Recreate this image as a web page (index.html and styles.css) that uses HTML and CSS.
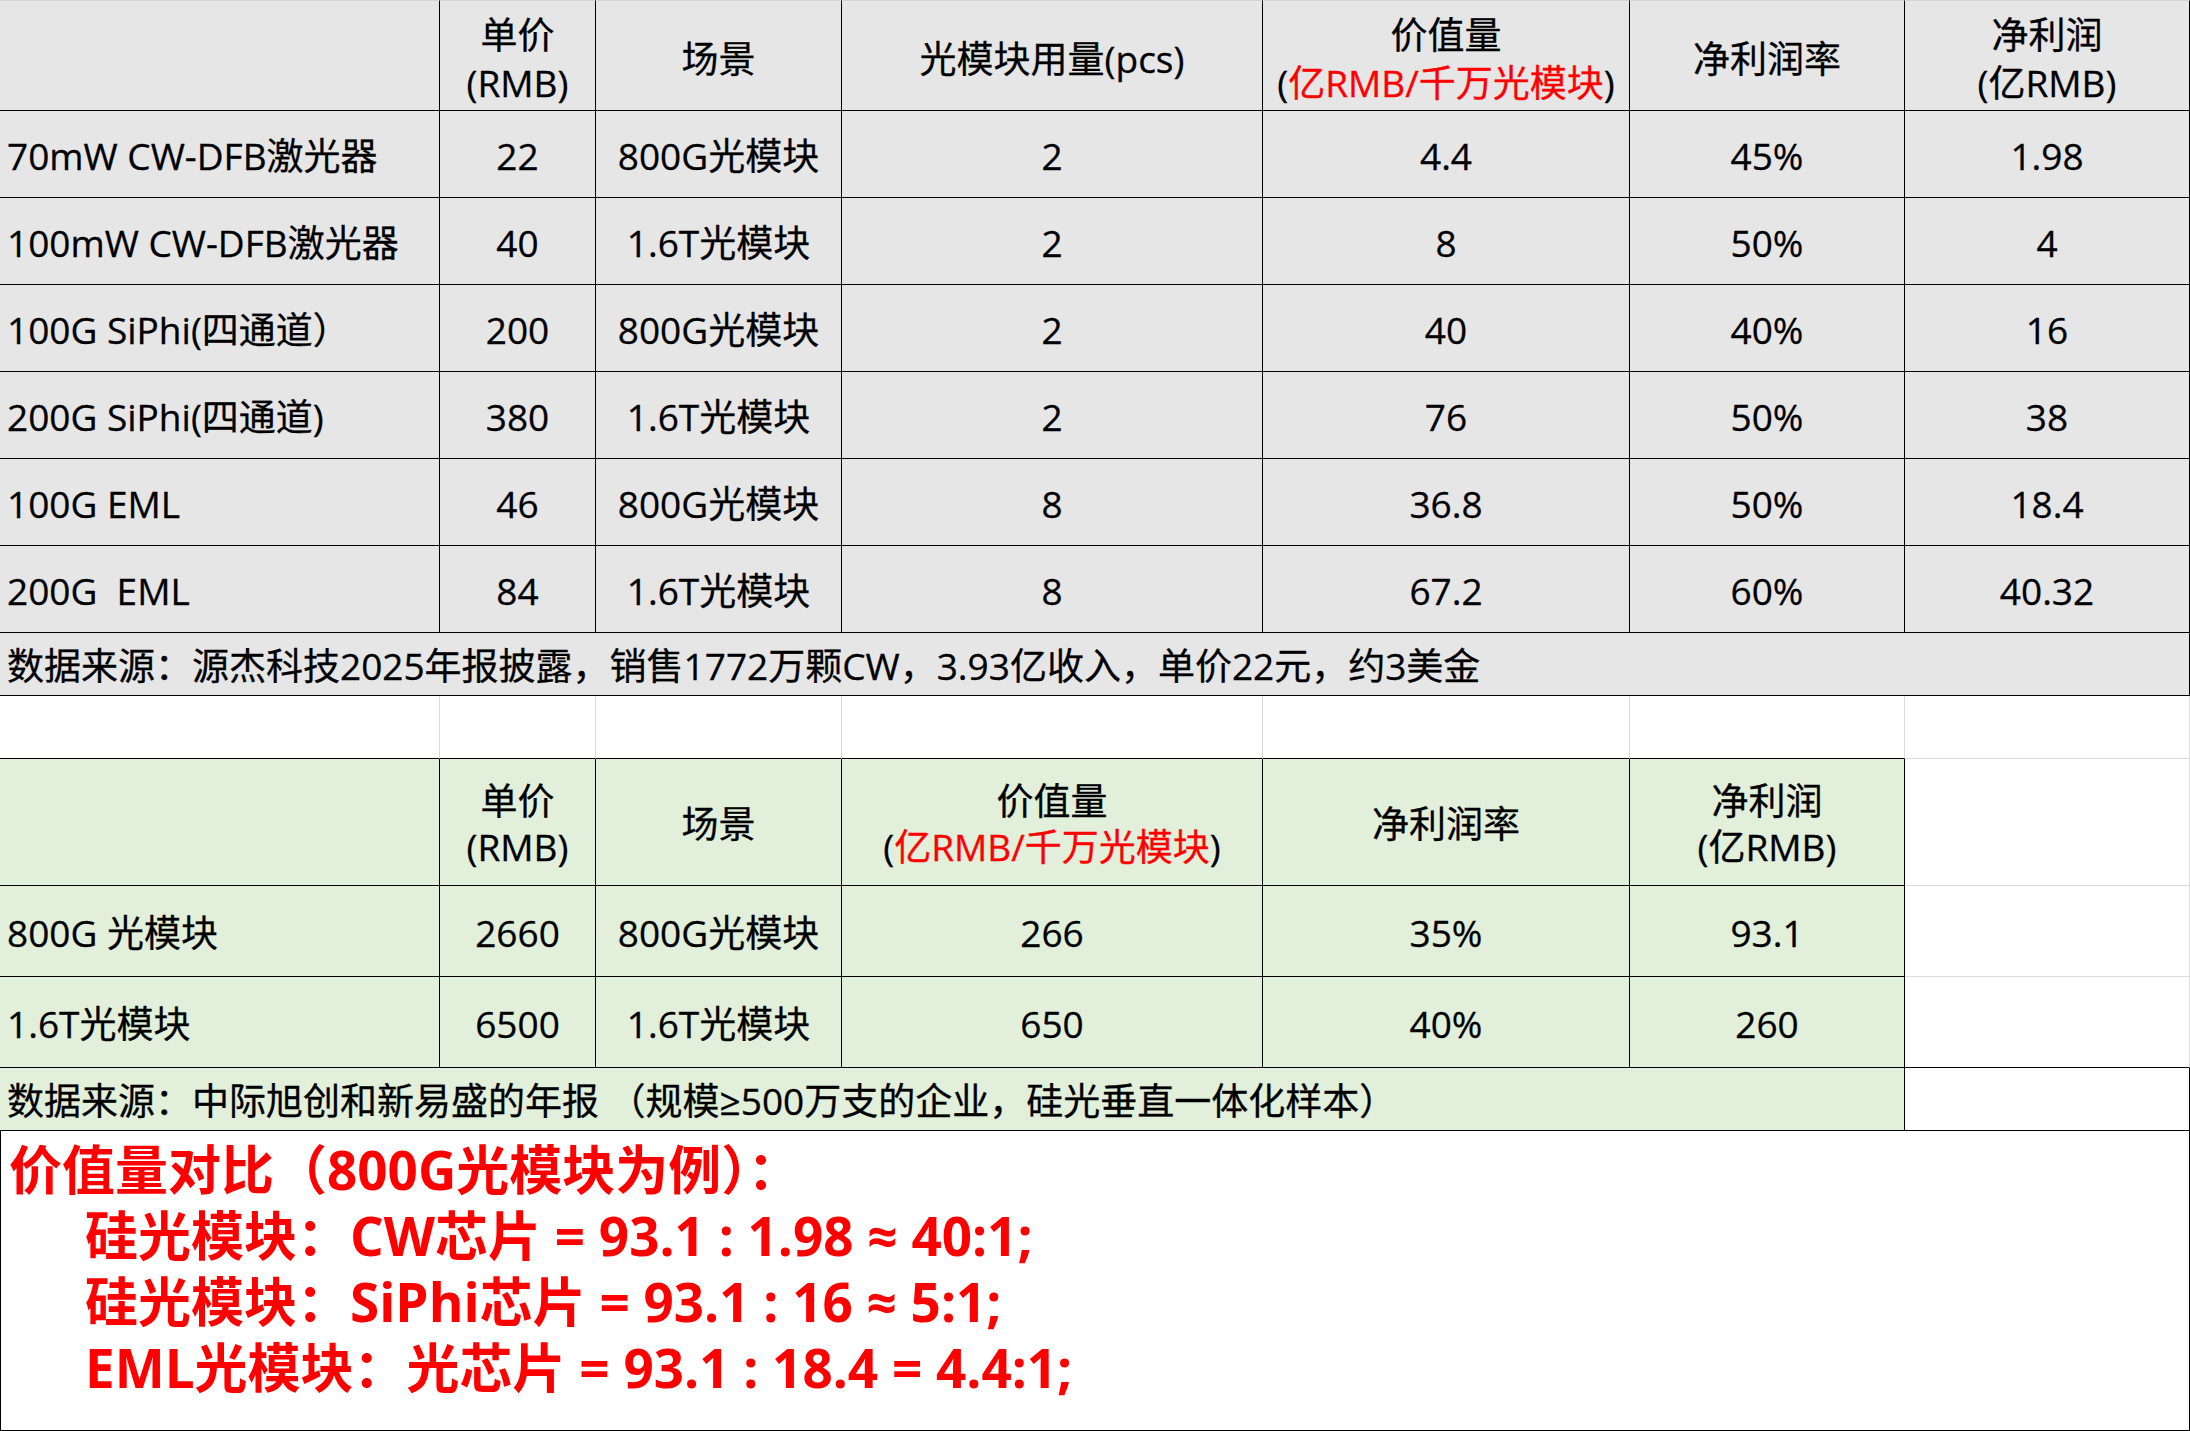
FILE: index.html
```html
<!DOCTYPE html>
<html lang="zh-CN">
<head>
<meta charset="utf-8">
<title>价值量对比</title>
<link rel="stylesheet" href="styles.css">
</head>
<body>
<div class="sheet">
  <!-- table 1 header -->
  <div class="c g br bb bt"></div>
  <div class="c g br bb bt hd"><div>单价<br>(RMB)</div></div>
  <div class="c g br bb bt hd"><div>场景</div></div>
  <div class="c g br bb bt hd"><div>光模块用量(pcs)</div></div>
  <div class="c g br bb bt hd"><div>价值量<br>(<span class="red">亿RMB/千万光模块</span>)</div></div>
  <div class="c g br bb bt hd"><div>净利润率</div></div>
  <div class="c g br bb bt hd"><div>净利润<br>(亿RMB)</div></div>

  <div class="c g br bb left">70mW CW-DFB激光器</div>
  <div class="c g br bb">22</div>
  <div class="c g br bb">800G光模块</div>
  <div class="c g br bb">2</div>
  <div class="c g br bb">4.4</div>
  <div class="c g br bb">45%</div>
  <div class="c g br bb">1.98</div>

  <div class="c g br bb left">100mW CW-DFB激光器</div>
  <div class="c g br bb">40</div>
  <div class="c g br bb">1.6T光模块</div>
  <div class="c g br bb">2</div>
  <div class="c g br bb">8</div>
  <div class="c g br bb">50%</div>
  <div class="c g br bb">4</div>

  <div class="c g br bb left">100G SiPhi(四通道）</div>
  <div class="c g br bb">200</div>
  <div class="c g br bb">800G光模块</div>
  <div class="c g br bb">2</div>
  <div class="c g br bb">40</div>
  <div class="c g br bb">40%</div>
  <div class="c g br bb">16</div>

  <div class="c g br bb left">200G SiPhi(四通道)</div>
  <div class="c g br bb">380</div>
  <div class="c g br bb">1.6T光模块</div>
  <div class="c g br bb">2</div>
  <div class="c g br bb">76</div>
  <div class="c g br bb">50%</div>
  <div class="c g br bb">38</div>

  <div class="c g br bb left">100G EML</div>
  <div class="c g br bb">46</div>
  <div class="c g br bb">800G光模块</div>
  <div class="c g br bb">8</div>
  <div class="c g br bb">36.8</div>
  <div class="c g br bb">50%</div>
  <div class="c g br bb">18.4</div>

  <div class="c g br bb left">200G&nbsp;&nbsp;EML</div>
  <div class="c g br bb">84</div>
  <div class="c g br bb">1.6T光模块</div>
  <div class="c g br bb">8</div>
  <div class="c g br bb">67.2</div>
  <div class="c g br bb">60%</div>
  <div class="c g br bb">40.32</div>

  <div class="c g br bb left span7">数据来源：源杰科技2025年报披露，销售1772万颗CW，3.93亿收入，单价22元，约3美金</div>

  <!-- gap row -->
  <div class="c w brl bb"></div>
  <div class="c w brl bb"></div>
  <div class="c w brl bb"></div>
  <div class="c w brl bb"></div>
  <div class="c w brl bb"></div>
  <div class="c w brl bb"></div>
  <div class="c w brl bbl"></div>

  <!-- table 2 header -->
  <div class="c gr br bb"></div>
  <div class="c gr br bb hd2"><div>单价<br>(RMB)</div></div>
  <div class="c gr br bb hd2"><div>场景</div></div>
  <div class="c gr br bb hd2"><div>价值量<br>(<span class="red">亿RMB/千万光模块</span>)</div></div>
  <div class="c gr br bb hd2"><div>净利润率</div></div>
  <div class="c gr br bb hd2"><div>净利润<br>(亿RMB)</div></div>
  <div class="c w brl bbl"></div>

  <div class="c gr br bb left">800G 光模块</div>
  <div class="c gr br bb">2660</div>
  <div class="c gr br bb">800G光模块</div>
  <div class="c gr br bb">266</div>
  <div class="c gr br bb">35%</div>
  <div class="c gr br bb">93.1</div>
  <div class="c w brl bbl"></div>

  <div class="c gr br bb left">1.6T光模块</div>
  <div class="c gr br bb">6500</div>
  <div class="c gr br bb">1.6T光模块</div>
  <div class="c gr br bb">650</div>
  <div class="c gr br bb">40%</div>
  <div class="c gr br bb">260</div>
  <div class="c w brl bb"></div>

  <div class="c gr br bb left span6">数据来源：中际旭创和新易盛的年报 （规模≥500万支的企业，硅光垂直一体化样本）</div>
  <div class="c w br bb"></div>

  <!-- summary box -->
  <div class="box">
    <div class="line">价值量对比（800G光模块为例）：</div>
    <div class="line indent">硅光模块：CW芯片 = 93.1 : 1.98 ≈ 40:1;</div>
    <div class="line indent">硅光模块：SiPhi芯片 = 93.1 : 16 ≈ 5:1;</div>
    <div class="line indent">EML光模块：光芯片 = 93.1 : 18.4 = 4.4:1;</div>
  </div>
</div>
</body>
</html>
```

FILE: styles.css
```css
html, body {
  margin: 0;
  padding: 0;
  background: #ffffff;
}

body {
  font-family: "Open Sans", "Noto Sans CJK SC", sans-serif;
  color: #000000;
}

.sheet {
  width: 2190px;
  display: grid;
  grid-template-columns: 440px 156px 246px 421px 367px 275px 285px;
  grid-template-rows: 111px repeat(6, 87px) 63px 63px 127px 91px 91px 63px 300px;
}

.c {
  box-sizing: border-box;
  display: flex;
  align-items: center;
  justify-content: center;
  text-align: center;
  font-size: 37px;
  line-height: 1.2;
  white-space: nowrap;
  overflow: hidden;
  padding-top: 4px;
  -webkit-text-stroke: 0.3px #000000;
}

.g { background: #e7e6e6; }
.gr { background: #e2efda; }
.w { background: #ffffff; }

.br { border-right: 1px solid #000000; }
.bb { border-bottom: 1px solid #000000; }
.brl { border-right: 1px solid #dadada; }
.bbl { border-bottom: 1px solid #dadada; }
.bt { border-top: 1px solid #d4d4d4; }

.left {
  justify-content: flex-start;
  text-align: left;
  padding-left: 7px;
}

.span7 { grid-column: span 7; }
.span6 { grid-column: span 6; }

.hd {
  line-height: 48px;
  padding-top: 6px;
}

.hd2 {
  line-height: 46px;
}

.red {
  color: #ff0000;
  -webkit-text-stroke: 0.3px #ff0000;
}

.box {
  grid-column: span 7;
  box-sizing: border-box;
  border-left: 1px solid #000000;
  border-right: 1px solid #000000;
  border-bottom: 1px solid #000000;
  padding: 6px 0 0 8px;
  color: #ff0000;
  font-size: 53px;
  font-weight: 700;
  line-height: 66px;
  white-space: nowrap;
}

.indent {
  padding-left: 76px;
}
```
